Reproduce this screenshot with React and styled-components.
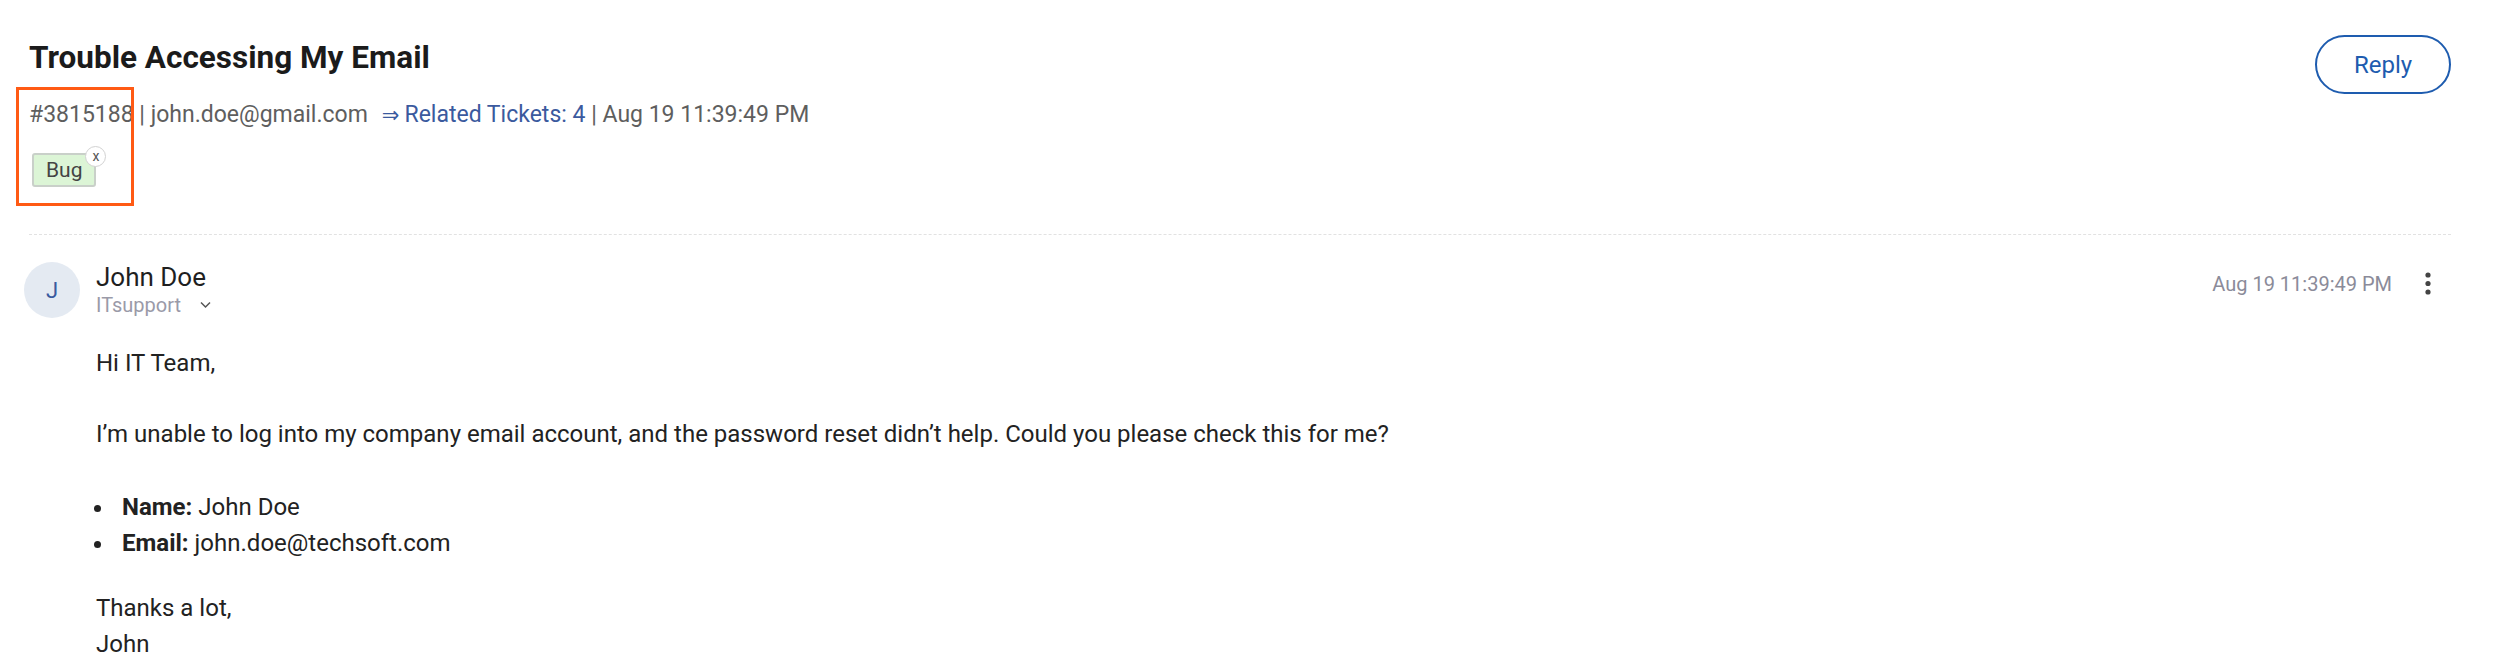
import React from "react";
import styled, { createGlobalStyle } from "styled-components";

const GlobalStyle = createGlobalStyle`
  html, body { margin: 0; padding: 0; background: #ffffff; }
  body { font-family: Roboto, "Noto Sans", "Liberation Sans", sans-serif; color: #222222; }
  * { box-sizing: border-box; }
`;

const Page = styled.div`
  padding: 40px 49px 0 24px;
  background: #fff;
`;

const Header = styled.header`
  position: relative;
  margin-left: 5px;
  display: flex;
  justify-content: space-between;
  align-items: flex-start;
  padding-bottom: 47px;
  border-bottom: 1px dashed #e2e2e2;
`;

const HeaderMain = styled.div`
  display: flex;
  flex-direction: column;
`;

const Title = styled.h1`
  margin: 0;
  font-size: 31.5px;
  line-height: 36px;
  font-weight: 700;
  color: #1b1b1b;
`;

const Meta = styled.div`
  margin-top: 21px;
  font-size: 23px;
  line-height: 36px;
  color: #5e5e5e;
  white-space: nowrap;
`;

const MetaLink = styled.a`
  color: #3b5a9e;
  text-decoration: none;
  margin-left: 14px;
  & .arrow { font-family: "DejaVu Sans", sans-serif; font-size: 21px; margin-right: 5px; }
`;

const Tags = styled.div`
  margin-top: 20px;
  margin-left: 3px;
  display: flex;
  gap: 8px;
`;

const Tag = styled.span`
  position: relative;
  display: inline-flex;
  align-items: center;
  height: 34px;
  padding: 0 12px;
  font-size: 21px;
  color: #444;
  background: #dcf5d6;
  border: 2px solid #c9d0c9;
  border-radius: 3px;
`;

const TagClose = styled.span`
  position: absolute;
  top: -9px;
  right: -12px;
  width: 21px;
  height: 21px;
  border-radius: 50%;
  background: #fff;
  border: 1.5px solid #d2d2d2;
  display: flex;
  align-items: center;
  justify-content: center;
  font-size: 14px;
  line-height: 1;
  color: #555;
  padding-bottom: 2px;
`;

const Highlight = styled.div`
  position: absolute;
  left: -13px;
  top: 47px;
  width: 118px;
  height: 119px;
  border: 3px solid #ff5a14;
  pointer-events: none;
`;

const ReplyButton = styled.button`
  margin-top: -5px;
  width: 136px;
  height: 59px;
  border: 2px solid #1e5caf;
  border-radius: 30px;
  background: #fff;
  color: #1e5caf;
  font-family: Roboto, "Noto Sans", sans-serif;
  font-size: 24px;
  font-weight: 400;
  cursor: pointer;
`;

const Message = styled.section`
  padding-top: 27px;
`;

const MessageHead = styled.div`
  display: flex;
  align-items: flex-start;
  gap: 16px;
`;

const Avatar = styled.div`
  width: 56px;
  height: 56px;
  border-radius: 50%;
  background: #e4eaf2;
  color: #3a5a9f;
  font-size: 22px;
  display: flex;
  align-items: center;
  justify-content: center;
  flex: none;
`;

const Sender = styled.div`
  flex: 1;
  display: flex;
  flex-direction: column;
`;

const SenderName = styled.div`
  font-size: 26px;
  line-height: 30px;
  color: #1f1f1f;
`;

const SenderGroup = styled.div`
  display: flex;
  align-items: center;
  gap: 19px;
  font-size: 20px;
  line-height: 26px;
  color: #9a9aa8;
`;

const Stamp = styled.div`
  display: flex;
  align-items: center;
  gap: 22px;
  padding-right: 9px;
  margin-top: 4px;
  font-size: 20px;
  line-height: 36px;
  color: #8b8b99;
`;

const Kebab = styled.button`
  width: 28px;
  height: 30px;
  border: none;
  background: transparent;
  padding: 0;
  display: flex;
  align-items: center;
  justify-content: center;
`;

const Body = styled.div`
  padding-left: 72px;
  padding-top: 27px;
  font-size: 24px;
  line-height: 36px;
  color: #222;
`;

const Para = styled.p`
  margin: 0 0 ${(p) => p.$gap || 0}px 0;
`;

const List = styled.ul`
  list-style: none;
  margin: 0 0 ${(p) => p.$gap || 0}px 0;
  padding: 0;
`;

const Item = styled.li`
  display: flex;
  &::before {
    content: "";
    flex: none;
    width: 7px;
    height: 7px;
    border-radius: 50%;
    background: #222;
    margin: 16px 21px 0 -2px;
  }
  & b { font-weight: 700; margin-right: 6px; }
`;

const Chevron = () => (
  <svg width="11" height="8" viewBox="0 0 11 8" fill="none">
    <path d="M1 1.5 L5.5 6 L10 1.5" stroke="#555" strokeWidth="1.5" />
  </svg>
);

const Dots = () => (
  <svg width="6" height="24" viewBox="0 0 6 24">
    <circle cx="3" cy="3" r="2.6" fill="#444" />
    <circle cx="3" cy="11.5" r="2.6" fill="#444" />
    <circle cx="3" cy="20" r="2.6" fill="#444" />
  </svg>
);

export default function App() {
  return (
    <>
      <GlobalStyle />
      <Page>
        <Header>
          <HeaderMain>
            <Title>Trouble Accessing My Email</Title>
            <Meta>
              #3815188 | john.doe@gmail.com
              <MetaLink href="#">
                <span className="arrow">⇒</span>Related Tickets: 4
              </MetaLink>{" "}
              | Aug 19 11:39:49 PM
            </Meta>
            <Tags>
              <Tag>
                Bug
                <TagClose>x</TagClose>
              </Tag>
            </Tags>
          </HeaderMain>
          <ReplyButton>Reply</ReplyButton>
          <Highlight />
        </Header>
        <Message>
          <MessageHead>
            <Avatar>J</Avatar>
            <Sender>
              <SenderName>John Doe</SenderName>
              <SenderGroup>
                ITsupport
                <Chevron />
              </SenderGroup>
            </Sender>
            <Stamp>
              Aug 19 11:39:49 PM
              <Kebab aria-label="More">
                <Dots />
              </Kebab>
            </Stamp>
          </MessageHead>
          <Body>
            <Para $gap={35}>Hi IT Team,</Para>
            <Para $gap={37}>
              I’m unable to log into my company email account, and the password reset didn’t help. Could you please check this for me?
            </Para>
            <List $gap={29}>
              <Item>
                <span><b>Name:</b>John Doe</span>
              </Item>
              <Item>
                <span><b>Email:</b>john.doe@techsoft.com</span>
              </Item>
            </List>
            <Para>
              Thanks a lot,
              <br />
              John
            </Para>
          </Body>
        </Message>
      </Page>
    </>
  );
}
